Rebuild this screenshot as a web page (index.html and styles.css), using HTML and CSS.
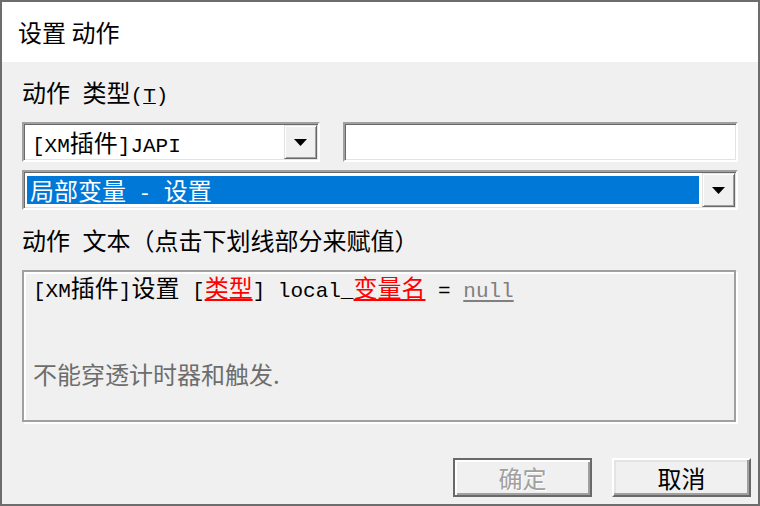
FILE: index.html
```html
<!DOCTYPE html>
<html lang="zh-CN">
<head>
<meta charset="utf-8">
<title>设置 动作</title>
<link rel="stylesheet" href="styles.css">
</head>
<body>
<div class="win">
  <div class="titlebar">设置 动作</div>
  <div class="content">
    <div class="label label-type">动作<span class="a"> </span>类型<span class="a">(<u>T</u>)</span></div>
    <div class="row">
      <div class="sunken combo combo-small">
        <div class="field"><span class="a">[XM</span>插件<span class="a">]JAPI</span></div>
        <div class="drop"><svg class="arrow" width="13" height="7" viewBox="0 0 13 7"><polygon points="0,0 13,0 6.5,7" fill="#000"/></svg></div>
      </div>
      <div class="sunken edit"></div>
    </div>
    <div class="sunken combo combo-wide">
      <div class="field-sel">局部变量<span class="a"> - </span>设置</div>
      <div class="drop"><svg class="arrow" width="13" height="7" viewBox="0 0 13 7"><polygon points="0,0 13,0 6.5,7" fill="#000"/></svg></div>
    </div>
    <div class="label label-text">动作<span class="a"> </span>文本（点击下划线部分来赋值）</div>
    <div class="textbox">
      <div class="line"><span class="a">[XM</span>插件<span class="a">]</span>设置<span class="a"> [</span><span class="red">类型</span><span class="a">] local_</span><span class="red">变量名</span><span class="a"> = </span><span class="a null">null</span></div>
      <div class="line">&nbsp;</div>
      <div class="line">&nbsp;</div>
      <div class="line note">不能穿透计时器和触发.</div>
    </div>
    <div class="buttons">
      <div class="btn btn-default disabled">确定</div>
      <div class="btn">取消</div>
    </div>
  </div>
</div>
</body>
</html>
```
FILE: styles.css
```css
html, body {
  margin: 0;
  padding: 0;
}
body {
  width: 760px;
  height: 506px;
  overflow: hidden;
  background: #f0f0f0;
  font-family: "Noto Sans CJK SC", "Noto Sans", sans-serif;
  color: #000;
}
.win {
  box-sizing: border-box;
  width: 760px;
  height: 506px;
  border: 2px solid #6d6d6d;
  background: #f0f0f0;
  display: flex;
  flex-direction: column;
}
.titlebar {
  flex: none;
  height: 60px;
  line-height: 60px;
  background: #fff;
  padding-left: 16px;
  font-size: 24px;
}
.content {
  padding: 0 20px;
  font-size: 24px;
  display: flex;
  flex-direction: column;
}
.a {
  font-family: "Liberation Mono", monospace;
  font-size: 21px;
}
.label {
  height: 24px;
  line-height: 24px;
  white-space: pre;
}
.label u {
  text-decoration-thickness: 1px;
  text-underline-offset: 1px;
}
.label-type {
  margin-top: 18px;
}
.label-text {
  margin-top: 18px;
}
.row {
  margin-top: 18px;
  display: flex;
  justify-content: space-between;
}
.sunken {
  box-sizing: border-box;
  height: 40px;
  border: 2px solid;
  border-color: #a0a0a0 #fff #fff #a0a0a0;
  padding: 1px;
  box-shadow: inset 1px 1px 0 #696969, inset -1px -1px 0 #e3e3e3;
  background: #fff;
}
.combo {
  display: flex;
}
.combo-small {
  width: 298px;
}
.edit {
  width: 395px;
}
.combo-wide {
  margin-top: 8px;
  width: 716px;
}
.field {
  flex: 1;
  line-height: 34px;
  padding-left: 7px;
  white-space: pre;
  overflow: hidden;
}
.field-sel {
  flex: 1;
  margin: 3px 3px 3px 2px;
  padding-left: 3px;
  background: #0078d7;
  color: #fff;
  line-height: 28px;
  white-space: pre;
}
.drop {
  flex: none;
  width: 33px;
  box-sizing: border-box;
  background: #f0f0f0;
  border: 1px solid;
  border-color: #e3e3e3 #696969 #696969 #e3e3e3;
  box-shadow: inset 1px 1px 0 #fff, inset -1px -1px 0 #a0a0a0;
  display: flex;
  align-items: center;
  justify-content: center;
}
.arrow {
  display: block;
}
.textbox {
  margin-top: 18px;
  box-sizing: border-box;
  width: 714px;
  height: 152px;
  border: 2px solid #a0a0a0;
  box-shadow: 2px 2px 0 #fff, inset 2px 2px 0 #fff;
  padding: 0 9px;
  line-height: 29px;
}
.line {
  height: 29px;
  white-space: pre;
}
.red {
  color: #f00;
  text-decoration: underline;
  text-decoration-thickness: 2px;
  text-underline-offset: 2px;
}
.null {
  color: #808080;
  text-decoration: underline;
  text-decoration-thickness: 2px;
  text-underline-offset: 3px;
}
.note {
  color: #6d6d6d;
}
.buttons {
  margin-top: 36px;
  margin-right: -13px;
  display: flex;
  justify-content: flex-end;
  gap: 20px;
}
.btn {
  box-sizing: border-box;
  width: 139px;
  height: 39px;
  border: 2px solid;
  border-color: #fff #696969 #696969 #fff;
  box-shadow: inset -2px -2px 0 #a0a0a0, inset 2px 2px 0 #e3e3e3;
  background: #f0f0f0;
  text-align: center;
  line-height: 35px;
}
.btn-default {
  border-color: #696969;
  box-shadow: inset 2px 2px 0 #fff, inset -2px -2px 0 #a0a0a0;
}
.disabled {
  color: #a0a0a0;
  text-shadow: 1px 1px 0 #fff;
}
```
